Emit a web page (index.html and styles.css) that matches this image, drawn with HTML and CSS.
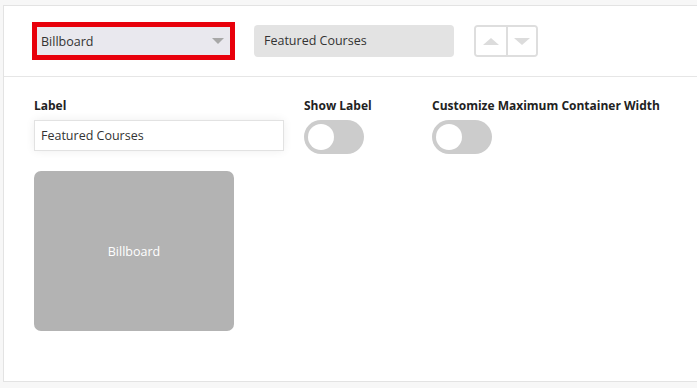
FILE: index.html
```html
<!DOCTYPE html>
<html lang="en">
<head>
    <meta charset="UTF-8">
    <meta name="viewport" content="width=device-width, initial-scale=1.0">
    <title>Billboard</title>
    <link rel="stylesheet" href="styles.css">
</head>
<body>
    <div class="panel">
        <div class="panel-header">
            <div class="type-select">
                <span>Billboard</span>
                <span class="caret"></span>
            </div>
            <div class="title-field">Featured Courses</div>
            <div class="order-buttons">
                <button class="order-btn"><span class="tri-up"></span></button>
                <button class="order-btn"><span class="tri-down"></span></button>
            </div>
        </div>

        <div class="panel-body">
            <div class="fields">
                <div class="field">
                    <label class="field-label">Label</label>
                    <div class="text-input">Featured Courses</div>
                </div>
                <div class="field">
                    <label class="field-label">Show Label</label>
                    <div class="switch"><span class="knob"></span></div>
                </div>
                <div class="field">
                    <label class="field-label">Customize Maximum Container Width</label>
                    <div class="switch"><span class="knob"></span></div>
                </div>
            </div>

            <div class="preview-tile">Billboard</div>
        </div>
    </div>
</body>
</html>
```

FILE: styles.css
```css
body {
    margin: 0;
    padding: 5px 0 0 3px;
    background-color: #f7f7f7;
    font-family: 'Open Sans', 'Segoe UI', sans-serif;
    color: #333;
    overflow: hidden;
}
.panel {
    background-color: #fff;
    border: 1px solid #e3e3e3;
    border-right: none;
    height: 375px;
    margin-right: -20px;
}
.panel-header {
    display: flex;
    align-items: center;
    height: 70px;
    padding-left: 28px;
    border-bottom: 1px solid #e6e6e6;
}
.type-select {
    display: flex;
    align-items: center;
    justify-content: space-between;
    box-sizing: border-box;
    width: 203px;
    height: 38px;
    padding: 0 6px 0 4px;
    border: 5px solid #e8000b;
    background-color: #e9e8ee;
    font-size: 12.5px;
    color: #333;
}
.caret {
    width: 0;
    height: 0;
    border-left: 6px solid transparent;
    border-right: 6px solid transparent;
    border-top: 6px solid #a8a8a8;
}
.title-field {
    box-sizing: border-box;
    width: 200px;
    height: 32px;
    margin-left: 19px;
    padding: 0 10px;
    line-height: 32px;
    background-color: #e3e3e3;
    border-radius: 4px;
    font-size: 12.5px;
    color: #333;
}
.order-buttons {
    display: flex;
    margin-left: 20px;
    border: 2px solid #dedede;
    border-radius: 4px;
    overflow: hidden;
}
.order-btn {
    display: flex;
    align-items: center;
    justify-content: center;
    width: 30px;
    height: 28px;
    padding: 0;
    border: none;
    background-color: #fff;
}
.order-btn + .order-btn {
    border-left: 2px solid #dedede;
}
.tri-up {
    border-left: 8px solid transparent;
    border-right: 8px solid transparent;
    border-bottom: 7px solid #dcdcdc;
}
.tri-down {
    border-left: 8px solid transparent;
    border-right: 8px solid transparent;
    border-top: 7px solid #dcdcdc;
}
.panel-body {
    padding: 20px 30px;
}
.fields {
    display: grid;
    grid-template-columns: 250px 108px auto;
    column-gap: 20px;
}
.field-label {
    display: block;
    height: 18px;
    margin-bottom: 5px;
    font-size: 12px;
    font-weight: 700;
    color: #222;
}
.text-input {
    box-sizing: border-box;
    height: 31px;
    padding: 0 6px;
    line-height: 29px;
    border: 1px solid #e2e2e2;
    box-shadow: 0 0 10px rgba(0, 0, 0, 0.07);
    font-size: 12.5px;
    color: #333;
}
.switch {
    position: relative;
    width: 60px;
    height: 34px;
    border-radius: 34px;
    background-color: #ccc;
}
.knob {
    position: absolute;
    left: 4px;
    top: 4px;
    width: 26px;
    height: 26px;
    border-radius: 50%;
    background-color: #fff;
}
.preview-tile {
    display: flex;
    align-items: center;
    justify-content: center;
    width: 200px;
    height: 160px;
    margin-top: 17px;
    border-radius: 7px;
    background-color: #b3b3b3;
    color: #fff;
    font-size: 12.5px;
}
```
